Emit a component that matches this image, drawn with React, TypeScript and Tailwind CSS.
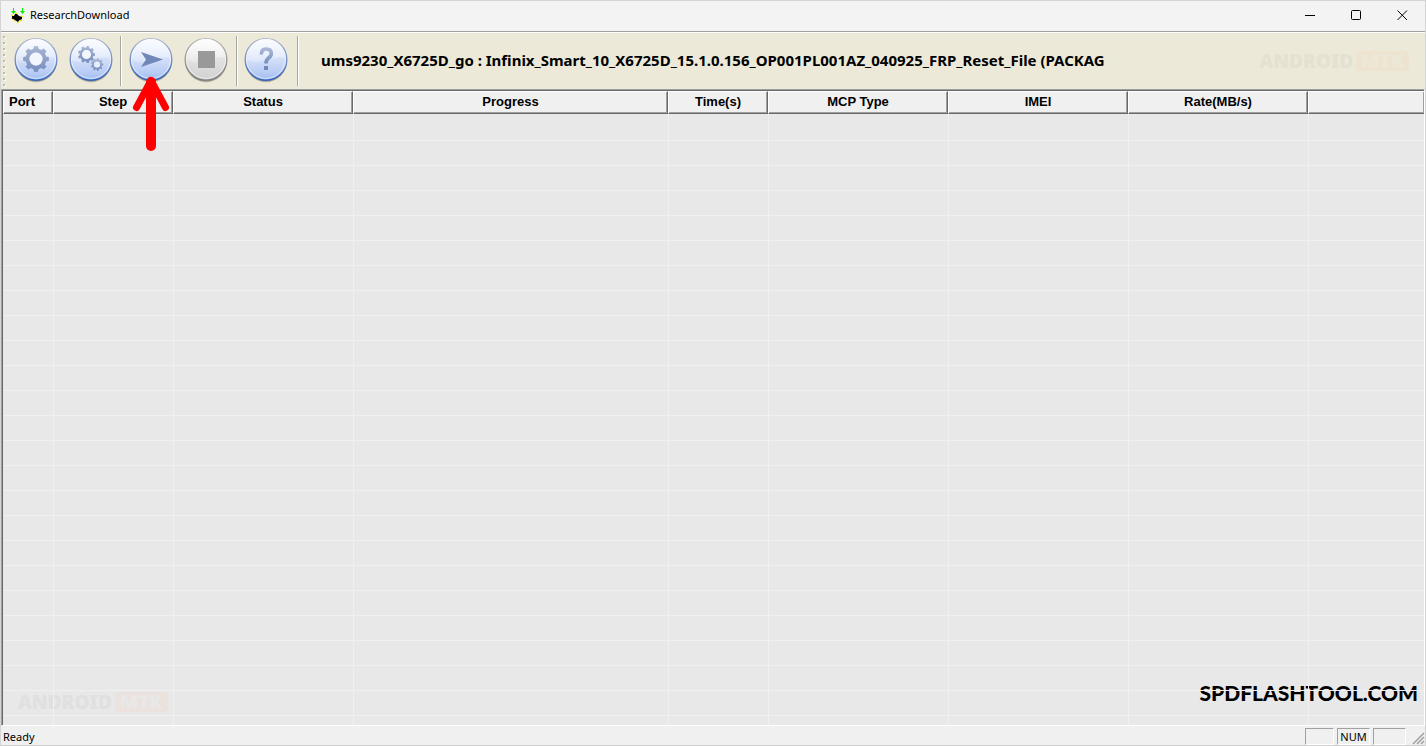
import React from 'react';

const columns = [
  { label: 'Port', width: 'w-[50px]' },
  { label: 'Step', width: 'w-[120px]' },
  { label: 'Status', width: 'w-[180px]' },
  { label: 'Progress', width: 'w-[315px]' },
  { label: 'Time(s)', width: 'w-[100px]' },
  { label: 'MCP Type', width: 'w-[180px]' },
  { label: 'IMEI', width: 'w-[180px]' },
  { label: 'Rate(MB/s)', width: 'w-[180px]' },
  { label: '', width: '' },
];

const rows = Array.from({ length: 48 }, (_, i) => i);

// Outline of a gear with square-ish teeth and a round hole
const gearPath = (cx: number, cy: number, outer: number, inner: number, hole: number, teeth = 8) => {
  const step = (Math.PI * 2) / teeth;
  const points: string[] = [];
  for (let i = 0; i < teeth; i++) {
    const a = i * step;
    [[-0.3, inner], [-0.2, outer], [0.2, outer], [0.3, inner]].forEach(([offset, r]) => {
      const angle = a + offset * step;
      points.push(`${(cx + r * Math.cos(angle)).toFixed(2)} ${(cy + r * Math.sin(angle)).toFixed(2)}`);
    });
  }
  return `M${points.join('L')}ZM${cx - hole} ${cy}a${hole} ${hole} 0 1 0 ${hole * 2} 0a${hole} ${hole} 0 1 0 ${-hole * 2} 0Z`;
};

const Defs: React.FC = () => (
  <svg className="absolute w-0 h-0" aria-hidden="true">
    <defs>
      <linearGradient id="ball-blue" x1="0" y1="0" x2="0" y2="1">
        <stop offset="0" stopColor="#eef3fe" />
        <stop offset="0.5" stopColor="#d3dff8" />
        <stop offset="0.8" stopColor="#bacdf5" />
        <stop offset="1" stopColor="#9dbbf2" />
      </linearGradient>
      <linearGradient id="ball-gray" x1="0" y1="0" x2="0" y2="1">
        <stop offset="0" stopColor="#fafafa" />
        <stop offset="0.5" stopColor="#e2e2e2" />
        <stop offset="1" stopColor="#d0d0d0" />
      </linearGradient>
      <linearGradient id="rim-blue" x1="0" y1="0" x2="0" y2="1">
        <stop offset="0" stopColor="#a9b3c9" />
        <stop offset="0.6" stopColor="#6f8ac4" />
        <stop offset="1" stopColor="#2f62bd" />
      </linearGradient>
      <linearGradient id="rim-gray" x1="0" y1="0" x2="0" y2="1">
        <stop offset="0" stopColor="#b4b4b4" />
        <stop offset="1" stopColor="#808080" />
      </linearGradient>
      <linearGradient id="shine" x1="0" y1="0" x2="0" y2="1">
        <stop offset="0" stopColor="#ffffff" stopOpacity="0.7" />
        <stop offset="1" stopColor="#ffffff" stopOpacity="0.25" />
      </linearGradient>
      <linearGradient id="glyph" x1="0" y1="0" x2="0" y2="1">
        <stop offset="0" stopColor="#a9b7d4" />
        <stop offset="1" stopColor="#758cbc" />
      </linearGradient>
    </defs>
  </svg>
);

interface ToolButtonProps {
  label: string;
  gray?: boolean;
  children: React.ReactNode;
}

const ToolButton: React.FC<ToolButtonProps> = ({ label, gray, children }) => (
  <button type="button" aria-label={label} title={label} className="block shrink-0">
    <svg width="44" height="50" viewBox="0 0 44 50" className="block">
      <circle cx="22" cy="26" r="20.4" fill="#5f5d56" opacity="0.25" />
      <circle cx="22" cy="24.6" r="21" fill="#5f5d56" opacity="0.5" />
      <circle cx="22" cy="23.4" r="20.8" fill={gray ? 'url(#ball-gray)' : 'url(#ball-blue)'} stroke={gray ? 'url(#rim-gray)' : 'url(#rim-blue)'} strokeWidth="1.4" />
      <circle cx="22" cy="22.8" r="19.6" fill="none" stroke="#fff" strokeOpacity="0.55" />
      <path d="M3 22A19 19 0 0 1 41 22Q32 20 22 24Q11 28 3 24Z" fill="url(#shine)" />
      {children}
    </svg>
  </button>
);

const Separator: React.FC = () => (
  <div className="w-[2px] h-[50px] shrink-0 bg-[#a6a6a6] border-r border-white" />
);

const Watermark: React.FC<{ textClass: string; boxClass: string }> = ({ textClass, boxClass }) => (
  <div className="flex items-center gap-[3px] font-['Noto_Sans'] text-[19px] leading-5 font-black">
    <span className={textClass}>ANDROID</span>
    <span className={`rounded-[3px] px-[5px] ${boxClass}`}>MTK</span>
  </div>
);

const TitleBar: React.FC = () => (
  <header className="h-[30px] shrink-0 flex items-center bg-[#f3f3f3] pl-2">
    <svg width="16" height="16" viewBox="0 0 16 16" className="shrink-0" aria-hidden="true">
      <path d="M4.500 0V5M13.500 0V5" stroke="#00f000" fill="none" />
      <path d="M2 3H7L4.500 6ZM11 3H16L13.500 6Z" fill="#00f000" />
      <path d="M2 7.500H4M6 5.500H8M2 10.500H4M5 12.500H7M8 14.500H10M11 12.500H13M12 8.500H14" stroke="#f4e400" strokeWidth="1.600" />
      <path d="M3 8H5L6 6H8L10 8L13 9V11L10 12.500L9 14L6 12L3 10.500Z" fill="#000" />
    </svg>
    <h1 className="ml-[5px] flex-1 pb-[2px] text-[11px]">ResearchDownload</h1>
    <div className="flex h-7 self-start">
      <button type="button" aria-label="Minimize" className="w-[45px] flex items-center justify-center">
        <svg width="11" height="11" viewBox="0 0 11 11"><path d="M0 5.500H10" stroke="#000" /></svg>
      </button>
      <button type="button" aria-label="Maximize" className="w-[46px] flex items-center justify-center">
        <svg width="11" height="11" viewBox="0 0 11 11"><rect x="0.500" y="0.500" width="9" height="9" rx="1" fill="none" stroke="#000" /></svg>
      </button>
      <button type="button" aria-label="Close" className="w-[46px] flex items-center justify-center">
        <svg width="11" height="11" viewBox="0 0 11 11"><path d="M0.500 0.500L10 10M10 0.500L0.500 10" stroke="#000" /></svg>
      </button>
    </div>
  </header>
);

const Toolbar: React.FC = () => (
  <div className="h-[56px] shrink-0 flex items-center bg-[#ece9d8] pl-[2px] pr-4">
    <svg width="4" height="54" className="shrink-0" aria-hidden="true">
      <defs>
        <pattern id="grip" width="4" height="6" patternUnits="userSpaceOnUse">
          <rect x="1" y="3" width="2" height="2" fill="#fff" />
          <rect x="0" y="2" width="2" height="2" fill="#bdb9a8" />
        </pattern>
      </defs>
      <rect width="4" height="54" fill="url(#grip)" />
    </svg>
    <div className="ml-[7px] mr-[7px] flex gap-[11px]">
      <ToolButton label="Load packet">
        <path d={gearPath(22, 23, 13, 10.5, 6.5)} fill="url(#glyph)" fillRule="evenodd" />
        <circle cx="22" cy="23" r="6.5" fill="#f3f6fd" />
      </ToolButton>
      <ToolButton label="Settings">
        <path d={gearPath(17.5, 18.5, 8.6, 7, 4.4, 9)} fill="url(#glyph)" fillRule="evenodd" />
        <path d={gearPath(28, 28.5, 6.4, 5, 3, 9)} fill="url(#glyph)" fillRule="evenodd" />
        <circle cx="17.5" cy="18.5" r="4.4" fill="#f3f6fd" />
        <circle cx="28" cy="28.5" r="3" fill="#e6edfb" />
      </ToolButton>
    </div>
    <Separator />
    <div className="ml-[7px] mr-2 flex gap-[11px]">
      <div className="relative">
        <ToolButton label="Start downloading">
          <path d="M12 16L34 23.5L12 31L17 23.5Z" fill="#7187b8" />
        </ToolButton>
        <svg width="40" height="78" viewBox="0 0 40 78" className="absolute left-[2px] top-[40px] z-10 pointer-events-none" aria-hidden="true">
          <path d="M20 6V70" stroke="#f00" strokeWidth="10" strokeLinecap="round" />
          <path d="M5.500 31.500L20 4.500L34.500 31.500" stroke="#f00" strokeWidth="7" strokeLinecap="round" strokeLinejoin="round" fill="none" />
        </svg>
      </div>
      <ToolButton label="Stop downloading" gray>
        <rect x="14" y="15" width="17" height="17" fill="#999" />
      </ToolButton>
    </div>
    <Separator />
    <div className="ml-[6px] mr-[9px]">
      <ToolButton label="About">
        <path d="M17.300 18.500Q17.300 13 22 13Q27.300 13 27.300 17.500Q27.300 20 24.500 22Q22 24 22 27.500" stroke="url(#glyph)" strokeWidth="3.600" fill="none" />
        <rect x="20" y="30" width="4" height="4" fill="#7088ba" />
      </ToolButton>
    </div>
    <Separator />
    <p className="ml-[22px] flex-1 pb-[2px] font-bold text-[15px] leading-5 whitespace-nowrap">
      ums9230_X6725D_go : Infinix_Smart_10_X6725D_15.1.0.156_OP001PL001AZ_040925_FRP_Reset_File (PACKAG
    </p>
    <Watermark textClass="text-[#e4e1d0]" boxClass="bg-[#eee3cf] text-[#ebe8d7]" />
  </div>
);

const PortTable: React.FC = () => (
  <table className="relative w-full table-fixed border-separate border-spacing-0">
    <thead>
      <tr>
        {columns.map((c, i) => (
          <th
            key={i}
            className={`${c.width} h-[23px] p-0 pb-[2px] bg-[#f0f0f0] border-t border-l border-t-white border-l-white border-r border-b border-r-[#696969] border-b-[#696969] shadow-[inset_-1px_-1px_0_#a0a0a0] font-['Liberation_Sans'] text-[13px] leading-[18px] font-bold last:border-r-0 first:text-left first:pl-[5px]`}
          >
            {c.label}
          </th>
        ))}
      </tr>
    </thead>
    <tbody>
      {rows.map((r) => (
        <tr key={r} className="group">
          {columns.map((_, i) => (
            <td key={i} className="h-[25px] group-first:h-[27px] p-0 border-b border-l first:border-l-0 border-[#f0f0f0]" />
          ))}
        </tr>
      ))}
    </tbody>
  </table>
);

const StatusBar: React.FC = () => (
  <footer className="h-[20px] shrink-0 flex items-end gap-[3px] bg-[#f0f0f0] border-b border-[#d0d0d0] pl-[2px] text-[11px]">
    <span className="flex-1 leading-[17px]">Ready</span>
    <span className="w-[29px] h-[17px] border border-t-[#a0a0a0] border-l-[#a0a0a0] border-r-white border-b-white" />
    <span className="w-[33px] h-[17px] border border-t-[#a0a0a0] border-l-[#a0a0a0] border-r-white border-b-white leading-4 text-center">NUM</span>
    <span className="w-[33px] h-[17px] border border-t-[#a0a0a0] border-l-[#a0a0a0] border-r-white border-b-white" />
    <svg width="16" height="16" viewBox="0 0 16 16" aria-hidden="true">
      <path d="M4 15L15 4M8 15L15 8M12 15L15 12" stroke="#a0a0a0" strokeWidth="1.500" />
    </svg>
  </footer>
);

const App: React.FC = () => {
  return (
    <div className="h-screen flex flex-col overflow-hidden bg-[#f0f0f0] border-t border-l border-r border-[#d4d4d4] font-['Noto_Sans',sans-serif] text-black">
      <Defs />
      <TitleBar />
      <div className="h-[2px] shrink-0 bg-white border-t border-[#a0a0a0]" />
      <Toolbar />
      <main className="relative flex-1 min-h-0 overflow-hidden bg-[#e8e8e8] border-t border-l border-r border-[#a0a0a0] border-b border-b-white border-r-white">
        <div className="h-full overflow-hidden border-t border-l border-[#696969]">
          <div className="absolute left-4 bottom-[13px]">
            <Watermark textClass="text-[#e0e0e0]" boxClass="bg-[#ebe2dd] text-[#e8e8e8]" />
          </div>
          <div className="absolute right-[6px] bottom-[18px] font-['Lato'] text-[21px] leading-7 font-black">SPDFLASHTOOL.COM</div>
          <PortTable />
        </div>
      </main>
      <StatusBar />
    </div>
  );
};

export default App;
